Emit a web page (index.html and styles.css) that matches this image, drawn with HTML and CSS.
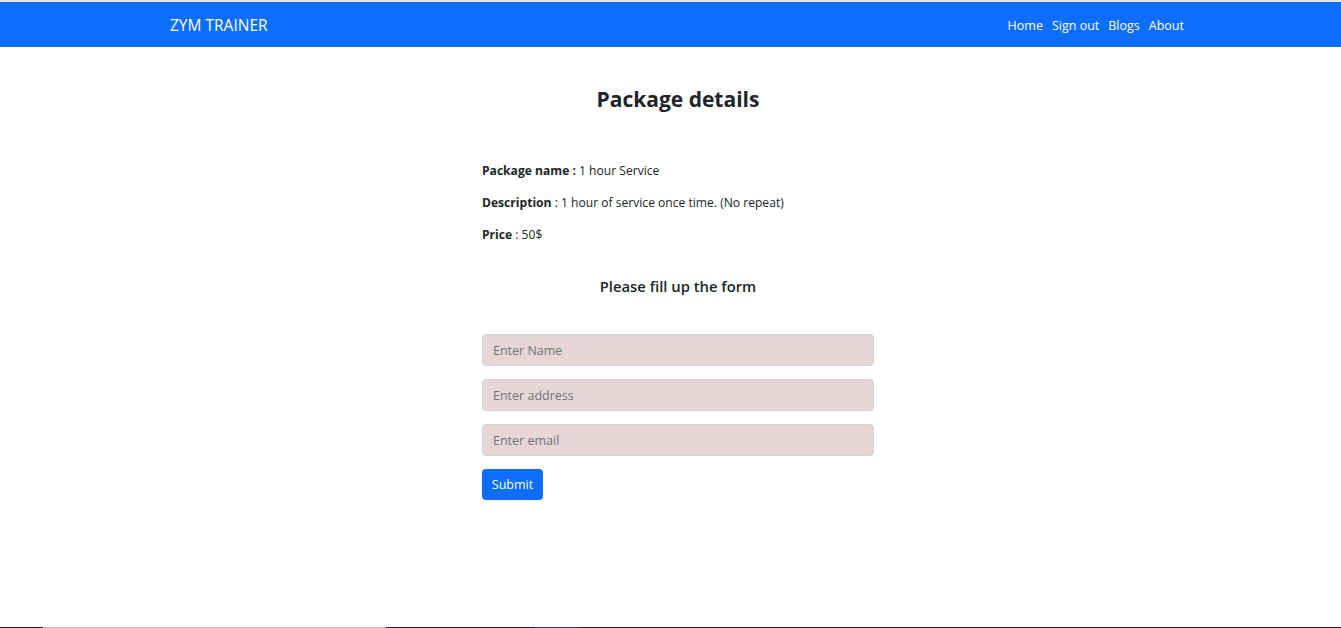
FILE: index.html
```html
<!DOCTYPE html>
<html lang="en">
<head>
<meta charset="utf-8">
<title>ZYM TRAINER</title>
<link rel="stylesheet" href="styles.css">
</head>
<body>
<div class="topline"></div>
<nav class="navbar">
  <a class="brand" href="#">ZYM TRAINER</a>
  <ul class="nav-links">
    <li><a href="#">Home</a></li>
    <li><a href="#">Sign out</a></li>
    <li><a href="#">Blogs</a></li>
    <li><a href="#">About</a></li>
  </ul>
</nav>
<main class="main">
  <h1 class="title">Package details</h1>
  <section class="details">
    <p><b>Package name :</b> 1 hour Service</p>
    <p><b>Description</b> : 1 hour of service once time. (No repeat)</p>
    <p><b>Price</b> : 50$</p>
  </section>
  <h2 class="subtitle">Please fill up the form</h2>
  <form class="form">
    <input class="field" type="text" placeholder="Enter Name">
    <input class="field" type="text" placeholder="Enter address">
    <input class="field" type="email" placeholder="Enter email">
    <div><button class="btn" type="button">Submit</button></div>
  </form>
</main>
<footer class="footer">
  <div class="seg seg-a"></div>
  <div class="seg seg-b"></div>
  <div class="seg seg-c"></div>
  <div class="seg seg-d"></div>
  <div class="seg seg-e"></div>
</footer>
</body>
</html>
```
FILE: styles.css
```css
* { box-sizing: border-box; }
html, body { margin: 0; padding: 0; }
body {
  font-family: "Open Sans", "Noto Sans", sans-serif;
  color: #212529;
  background: #fff;
  font-size: 14px;
}
.topline { height: 2px; background: #e4e6e8; }
.navbar {
  height: 45px;
  background: #0d6efd;
  display: flex;
  align-items: center;
  justify-content: space-between;
  padding: 0 157px 0 170px;
}
.brand {
  color: #fff;
  text-decoration: none;
  font-size: 15.5px;
}
.nav-links {
  list-style: none;
  margin: 0;
  padding: 0;
  display: flex;
  gap: 9px;
}
.nav-links a {
  color: #fff;
  text-decoration: none;
  font-size: 12.5px;
}
.main {
  padding-left: 15px;
  display: flex;
  flex-direction: column;
  align-items: center;
  height: 580px;
}
.title {
  margin: 38px 0 0;
  font-size: 21px;
  font-weight: 700;
  line-height: 28px;
}
.details {
  width: 392px;
  margin-top: 48px;
}
.details p {
  margin: 0 0 13px;
  line-height: 19px;
  font-size: 12.1px;
}
.subtitle {
  margin: 19px 0 0;
  font-size: 14.8px;
  font-weight: 600;
  line-height: 20px;
}
.form {
  width: 392px;
  margin-top: 38px;
  display: flex;
  flex-direction: column;
  gap: 13px;
}
.field {
  height: 32px;
  width: 100%;
  background: #e8d6d6;
  border: 1px solid #ced4da;
  border-radius: 4px;
  padding: 0 10px;
  font-family: inherit;
  font-size: 12.5px;
  color: #212529;
}
.field::placeholder { color: #6c757d; }
.btn {
  height: 31px;
  width: 61px;
  background: #0d6efd;
  color: #fff;
  border: none;
  border-radius: 4px;
  font-family: inherit;
  font-size: 12.5px;
  padding: 0;
}
.footer {
  display: flex;
  height: 60px;
  background: #212529;
}
.seg { height: 100%; }
.seg-a { width: 43px; background: #212529; }
.seg-b { width: 343px; background: #bdbdbd; }
.seg-c { width: 148px; background: #212529; }
.seg-d { width: 47px; background: #343a40; }
.seg-e { flex: 1; background: #212529; }
```
